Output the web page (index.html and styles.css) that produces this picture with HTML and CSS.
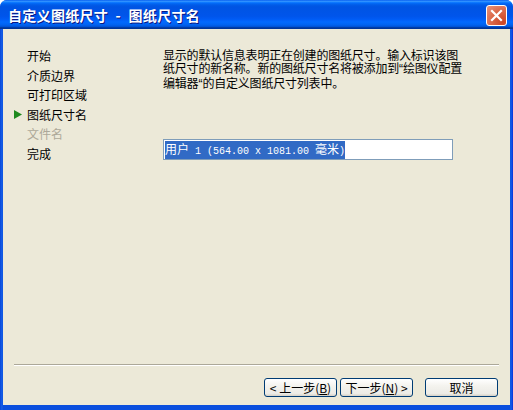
FILE: index.html
```html
<!DOCTYPE html>
<html lang="zh-CN">
<head>
<meta charset="utf-8">
<title>自定义图纸尺寸 - 图纸尺寸名</title>
<link rel="stylesheet" href="styles.css">
</head>
<body>
<div class="window">
  <div class="titlebar">
    <span class="title">自定义图纸尺寸 - 图纸尺寸名</span>
    <button class="close" aria-label="关闭">
      <svg width="13" height="13" viewBox="0 0 13 13"><path d="M2 2 L11 11 M11 2 L2 11" stroke="#fff" stroke-width="2.2" stroke-linecap="square"/></svg>
    </button>
  </div>
  <div class="client">
    <div class="wizard-body">
      <ul class="steps">
        <li class="step"><span class="marker"></span>开始</li>
        <li class="step"><span class="marker"></span>介质边界</li>
        <li class="step"><span class="marker"></span>可打印区域</li>
        <li class="step current"><span class="marker"><svg width="8" height="9" viewBox="0 0 8 9"><path d="M0 0 L8 4.5 L0 9 Z" fill="#1E8A1E"/></svg></span>图纸尺寸名</li>
        <li class="step disabled"><span class="marker"></span>文件名</li>
        <li class="step"><span class="marker"></span>完成</li>
      </ul>
      <div class="page">
        <p class="desc">显示的默认信息表明正在创建的图纸尺寸。输入标识该图<br>纸尺寸的新名称。新的图纸尺寸名将被添加到<span class="q">“</span>绘图仪配置<br>编辑器<span class="q">“</span>的自定义图纸尺寸列表中。</p>
        <div class="field"><span class="sel">用户<span class="mono"> 1 (564.00 x 1081.00 </span>毫米<span class="mono">)</span></span></div>
      </div>
    </div>
    <div class="separator"></div>
    <div class="footer">
      <div class="nav-buttons">
        <button class="btn">&lt; 上一步(<u>B</u>)</button>
        <button class="btn">下一步(<u>N</u>) &gt;</button>
      </div>
      <button class="btn cancel">取消</button>
    </div>
  </div>
</div>
</body>
</html>
```

FILE: styles.css
```css
* { box-sizing: border-box; }

html, body {
  margin: 0;
  padding: 0;
  background: #ffffff;
}

body {
  width: 513px;
  height: 410px;
  font-family: "Noto Sans CJK SC", "Liberation Sans", sans-serif;
  font-size: 12px;
  color: #000;
}

.window {
  width: 513px;
  height: 410px;
  display: flex;
  flex-direction: column;
  background: linear-gradient(to right, #0846D8 0, #1660E8 2px, #0A4FDE 3px, #0A4FDE 510px, #1660E8 511px, #0831D9 513px);
  border-radius: 7px 7px 0 0;
  overflow: hidden;
}

/* Luna blue caption */
.titlebar {
  height: 29px;
  flex: none;
  display: flex;
  align-items: center;
  justify-content: space-between;
  padding: 0 6px 0 8px;
  background: linear-gradient(to bottom,
    #0058EE 0%, #3593FF 4%, #288EFF 6%, #127DFF 8%, #036FFC 10%,
    #0262EE 14%, #0057E5 20%, #0054E3 24%, #0055EB 56%, #005BF5 66%,
    #026AFE 76%, #0062EF 86%, #0052D6 92%, #0040AB 94%, #003092 100%);
}

.title {
  color: #fff;
  font-weight: bold;
  font-size: 14px;
  letter-spacing: 0.3px;
  word-spacing: 4px;
  text-shadow: 1px 1px 0 #0A1883;
  line-height: 16px;
  white-space: pre;
}

.close {
  width: 21px;
  height: 21px;
  padding: 0;
  margin-top: 1px;
  border: 1px solid #fff;
  border-radius: 3px;
  background: radial-gradient(circle at 85% 85%, #CC4625 0%, #DC6B4C 55%, #E9957B 100%);
  display: flex;
  align-items: center;
  justify-content: center;
}

.client {
  flex: 1;
  margin: 0 3px 5px 3px;
  background: #ECE9D8;
  display: flex;
  flex-direction: column;
}

.wizard-body {
  flex: 1;
  display: flex;
}

.steps {
  list-style: none;
  margin: 0;
  width: 160px;
  padding: 17px 0 0 11px;
}

.step {
  display: flex;
  align-items: center;
  height: 19.5px;
  line-height: 19.5px;
  white-space: nowrap;
}

.marker {
  width: 13px;
  flex: none;
  display: flex;
  align-items: center;
}

.step.disabled { color: #ACA899; }

.page {
  flex: 1;
  padding-top: 19px;
}

.desc {
  margin: 0;
  line-height: 13px;
  white-space: nowrap;
  letter-spacing: -0.2px;
}

/* narrow Latin-style quote marks */
.q {
  font-family: "Liberation Sans", sans-serif;
  letter-spacing: 0;
}

.field {
  margin-top: 48px;
  width: 290px;
  height: 21px;
  border: 1px solid #7F9DB9;
  background: #fff;
  display: flex;
  align-items: center;
  padding-left: 1px;
}

.sel {
  background: #316AC5;
  color: #fff;
  line-height: 15px;
  white-space: pre;
}

.mono {
  font-family: "Liberation Mono", monospace;
  font-size: 10px;
}

.separator {
  margin: 0 11px;
  height: 2px;
  border-top: 1px solid #ACA899;
  border-bottom: 1px solid #fff;
  flex: none;
}

.footer {
  flex: none;
  display: flex;
  justify-content: flex-end;
  gap: 12px;
  padding: 12px 12px 8px 0;
}

.nav-buttons {
  display: flex;
  gap: 3px;
}

.btn {
  width: 73px;
  height: 19px;
  padding: 0;
  font-family: "Noto Sans CJK SC", "Liberation Sans", sans-serif;
  font-size: 12px;
  line-height: 17px;
  color: #000;
  border: 1px solid #003C74;
  border-radius: 3px;
  background: linear-gradient(to bottom, #FFFFFF 0%, #F4F3EE 40%, #ECEBE6 86%, #D6D0C5 100%);
  white-space: pre;
}

.btn u { text-decoration: underline; }
```
